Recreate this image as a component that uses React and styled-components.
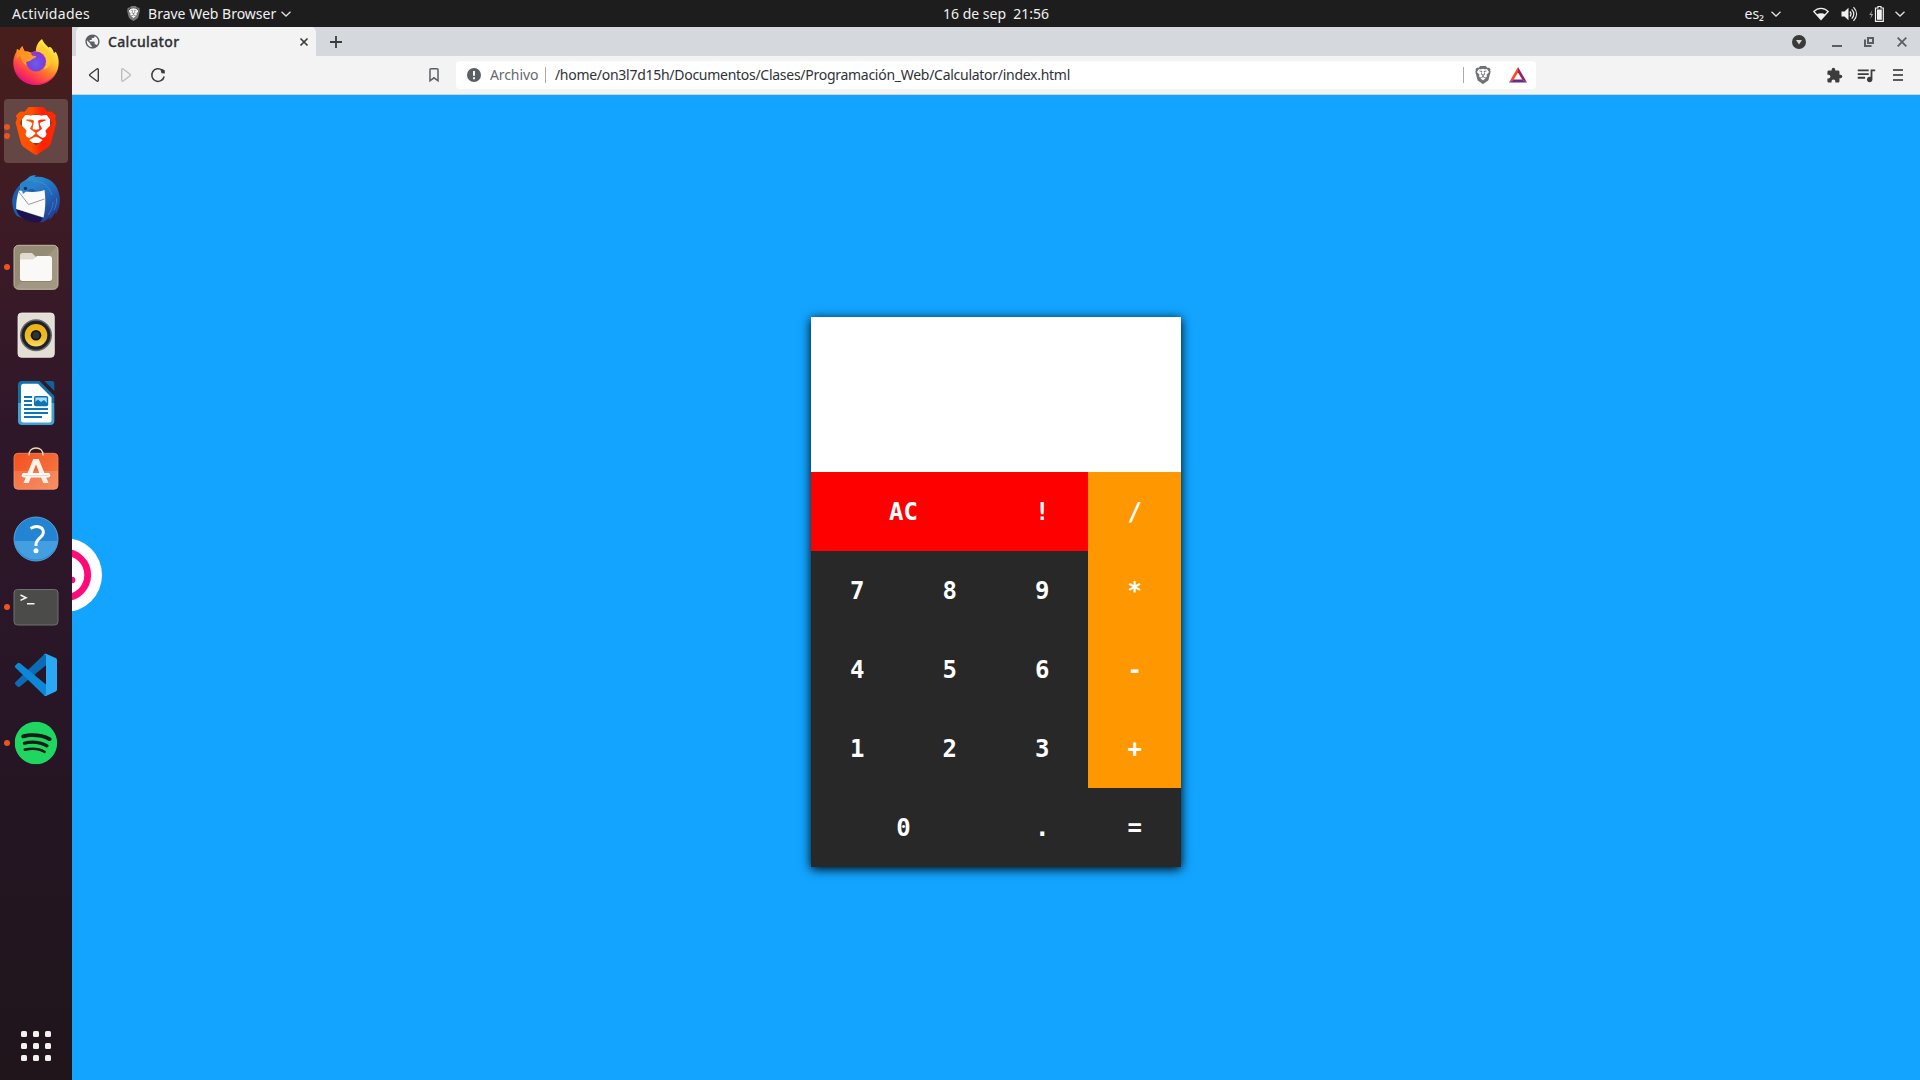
import React from "react";
import styled, { createGlobalStyle } from "styled-components";
import { SiBrave, SiSpotify } from "react-icons/si";
import { MdExtension, MdPublic, MdQueueMusic } from "react-icons/md";

const GlobalStyle = createGlobalStyle`
  * { box-sizing: border-box; }
  body { margin: 0; overflow: hidden; }
`;

const Desktop = styled.div`
  width: 1920px;
  height: 1080px;
  display: flex;
  flex-direction: column;
  font-family: "Noto Sans", "Open Sans", sans-serif;
  font-size: 14px;
  overflow: hidden;
`;

/* ---------- GNOME top bar ---------- */

const TopBar = styled.header`
  height: 27px;
  flex: none;
  display: flex;
  align-items: center;
  background: #1d1d1d;
  color: #f0f0f0;
  padding: 0 15px 0 12px;
  line-height: 26px;
`;

const TopLeft = styled.div`
  width: 931px;
  display: flex;
  align-items: center;
`;

const BarText = styled.span`
  white-space: pre;
  letter-spacing: ${(p) => p.$track || 0}px;
  font-size: ${(p) => p.$size || 14}px;
`;

const AppMenu = styled.div`
  display: flex;
  align-items: center;
  margin-left: 36px;
`;

const ShieldBadge = styled.span`
  display: flex;
  margin-right: 7px;
  color: #77787a;
  background: radial-gradient(ellipse 5px 6px, #f4f4f4 95%, transparent);
`;

const Tray = styled.div`
  margin-left: auto;
  display: flex;
  align-items: center;
`;

const Glyph = styled.svg`
  display: block;
  flex: none;
  width: ${(p) => p.$w}px;
  height: ${(p) => p.$h || p.$w}px;
  margin-left: ${(p) => p.$ml || 0}px;
  overflow: visible;
`;

/* ---------- Dock ---------- */

const Workspace = styled.div`
  flex: 1;
  min-height: 0;
  display: flex;
`;

const Dock = styled.nav`
  width: 72px;
  flex: none;
  display: flex;
  flex-direction: column;
  gap: 4px;
  padding: 4px 4px 2px;
  background: linear-gradient(180deg, #481e1b 0%, #3d1b25 18%, #2f172a 38%, #281627 62%, #21151e 90%, #20151b 100%);
`;

const Tile = styled.div`
  position: relative;
  width: 64px;
  height: 64px;
  display: grid;
  place-items: center;
  border-radius: 4px;
  background: ${(p) => (p.$active ? "#644644" : "transparent")};
  margin-top: ${(p) => (p.$last ? "auto" : 0)};
`;

const Dots = styled.div`
  position: absolute;
  left: 0;
  top: 0;
  height: 100%;
  display: flex;
  flex-direction: column;
  justify-content: center;
  gap: 3px;
`;

const Dot = styled.i`
  width: 6px;
  height: 6px;
  border-radius: 50%;
  background: #e95420;
`;

const AppGrid = styled.div`
  display: grid;
  grid-template-columns: repeat(3, 6px);
  gap: 6px;
`;

const GridDot = styled.i`
  height: 6px;
  border-radius: 1.5px;
  background: #f2f1f0;
`;

/* ---------- Browser ---------- */

const Browser = styled.main`
  flex: 1;
  min-width: 0;
  display: flex;
  flex-direction: column;
`;

const TabStrip = styled.div`
  height: 29px;
  flex: none;
  display: flex;
  align-items: center;
  background: #d5d8dd;
  padding: 0 13px 0 4px;
`;

const Tab = styled.div`
  width: 240px;
  height: 29px;
  display: flex;
  align-items: center;
  padding: 0 8px 0 8px;
  border-radius: 5px 5px 0 0;
  background: #f3f3f3;
  color: #2e3033;
`;

const TabTitle = styled.span`
  flex: 1;
  margin-left: 7px;
  font-weight: 500;
  -webkit-text-stroke: 0.3px currentColor;
  line-height: 28px;
  letter-spacing: ${(p) => p.$track}px;
`;

const WindowControls = styled.div`
  margin-left: auto;
  display: flex;
  align-items: center;
`;

const Toolbar = styled.div`
  height: 39px;
  flex: none;
  display: flex;
  align-items: center;
  padding: 0 17px 0 17px;
  background: #f3f3f3;
  border-bottom: 1px solid #cfd2d6;
  color: #3c3c3c;
`;

const AddressBar = styled.div`
  width: 1080px;
  height: 28px;
  margin-left: 17px;
  padding: 0 9px 0 11px;
  display: flex;
  align-items: center;
  border-radius: 4px;
  background: #fff;
`;

const UrlText = styled.span`
  font-size: 14px;
  line-height: 28px;
  white-space: pre;
  color: ${(p) => p.$color};
  letter-spacing: ${(p) => p.$track}px;
  width: ${(p) => p.$width}px;
  margin-left: ${(p) => p.$ml}px;
`;

const Divider = styled.i`
  width: 1px;
  height: 16px;
  background: #a9abae;
  margin-left: ${(p) => p.$ml}px;
`;

const ShieldButton = styled.span`
  display: flex;
  margin: 0 17px 0 10px;
  color: #707275;
`;

const Actions = styled.div`
  margin-left: auto;
  display: flex;
  align-items: center;
`;

const Page = styled.section`
  position: relative;
  flex: 1;
  min-height: 0;
  overflow: hidden;
  display: flex;
  align-items: center;
  justify-content: center;
  background: #12a4ff;
`;

const Recorder = styled.svg`
  position: absolute;
  left: 0;
  top: 443px;
  width: 31px;
  height: 74px;
`;

/* ---------- Calculator ---------- */

const Calculator = styled.div`
  width: 370px;
  height: 550px;
  margin-bottom: -9px;
  display: grid;
  grid-template-columns: 92.5px 92.5px 92.3px 92.7px;
  grid-template-rows: 155px repeat(5, 79px);
  background: #282828;
  box-shadow: 0 2px 10px #000;
`;

const Screen = styled.div`
  grid-column: 1 / -1;
  background: #fff;
`;

const keyColors = { clear: "#ff0000", operator: "#ff9800", digit: "#282828" };

const Key = styled.button`
  grid-column: span ${(p) => p.$span || 1};
  border: 0;
  padding: 0;
  background: ${(p) => keyColors[p.$kind]};
  color: #fff;
  font: bold 24px "DejaVu Sans Mono", monospace;
`;

const keys = [
  ["AC", "clear", 2], ["!", "clear"], ["/", "operator"],
  ["7", "digit"], ["8", "digit"], ["9", "digit"], ["*", "operator"],
  ["4", "digit"], ["5", "digit"], ["6", "digit"], ["-", "operator"],
  ["1", "digit"], ["2", "digit"], ["3", "digit"], ["+", "operator"],
  ["0", "digit", 2], [".", "digit"], ["=", "digit"],
];

/* ---------- Icons ---------- */

const Icon48 = ({ children }) => (
  <Glyph $w={48} viewBox="0 0 48 48">{children}</Glyph>
);

const Firefox = () => (
  <Icon48>
    <defs>
      <linearGradient id="ffBody" x1="0.8" y1="0.1" x2="0.25" y2="0.95">
        <stop offset="0" stopColor="#fff14a" />
        <stop offset="0.3" stopColor="#ffc22e" />
        <stop offset="0.55" stopColor="#ff7b2c" />
        <stop offset="0.8" stopColor="#ff3a4e" />
        <stop offset="1" stopColor="#e3107f" />
      </linearGradient>
      <radialGradient id="ffGlobe" cx="0.5" cy="0.6" r="0.6">
        <stop offset="0" stopColor="#6a5cf0" />
        <stop offset="0.6" stopColor="#7644dc" />
        <stop offset="1" stopColor="#a02ad0" />
      </radialGradient>
      <linearGradient id="ffFox" x1="0" y1="0" x2="1" y2="1">
        <stop offset="0" stopColor="#ff8a1f" />
        <stop offset="1" stopColor="#ffa02a" />
      </linearGradient>
    </defs>
    <path fill="url(#ffBody)" d="M30 0c1 3 4 6 6.500 8.500l1.500-.8c2 1.500 3.500 4 4 6.300l1.800-1.200C46 16.500 46.800 20 46.700 24 46.500 36.500 36.500 46 24 46S1.300 36.500 1.300 24c0-4.500 1-8 3.200-11.500l.5-2.500 2.500 1.500c.5-1.700 1.700-3.200 3.200-4.200.3 2.200.9 3.700 2.200 5.200 2.200-.3 4.400.2 6.100 1.200 1.500-.9 3.300-1.300 5-1.300C23.500 8 26 3 30 0z" />
    <path fill="#f31673" opacity=".65" d="M3 31c4 9 12 13.500 21 13.500S41 40 45 31c-3 10-12 15-21 15S6 41 3 31z" />
    <circle cx="24" cy="22.500" r="10" fill="url(#ffGlobe)" />
    <path fill="url(#ffFox)" d="M4.500 12.500 5 10l2.500 1.500c.5-1.700 1.700-3.200 3.200-4.200.3 2.200.9 3.700 2.200 5.200 2.400-.2 4.500.2 6.100 1.600l1 2.400 4.200.8c-.2 2-3.500 2.200-4.700 3.400-1.400 1.500-4 2-5.500 2 .2 2 .5 3 1 4-4-2-6-5-6.300-9.700-1.500.3-3.100 1.200-4.200 3 0-3.500-.2-6.500 1-9.500z" />
    <path fill="#ffc930" d="M26 12c5 0 8.500 4 8.500 9.500 0 3.500-1 7-3 9 7-2 9.500-8 7-15-1.500-3-4-5-7-7.500l-3-3c.3 3 0 5-1.500 6.500z" opacity=".85" />
  </Icon48>
);

const Brave = () => (
  <Icon48>
    <defs>
      <linearGradient id="braveShield" x1="0" x2="1">
        <stop offset="0" stopColor="#ff5500" />
        <stop offset="0.4" stopColor="#ff5000" />
        <stop offset="0.65" stopColor="#ff2000" />
        <stop offset="1" stopColor="#ff2a00" />
      </linearGradient>
    </defs>
    <path fill="#fff" d="M10 8h28v28H10z" />
    <SiBrave x="0" y="0" size={48} style={{ fill: "url(#braveShield)" }} />
  </Icon48>
);

const Thunderbird = () => (
  <Icon48>
    <defs>
      <linearGradient id="tbBody" x1="0.1" y1="0" x2="0.7" y2="1">
        <stop offset="0" stopColor="#2e9bd8" />
        <stop offset="0.45" stopColor="#2472c4" />
        <stop offset="1" stopColor="#233a91" />
      </linearGradient>
    </defs>
    <path fill="#1c5faf" d="M8 10C2 15-.5 23 .3 29c.4 4 2 9 4.700 12l8 3 18 1 8-24z" />
    <path fill="#20124d" d="M4 34l27 9-3 4C18 49 6 43 4 34z" />
    <path fill="url(#tbBody)" d="M8 9c3-3 6-3.500 8-6 2-2 5-3 8-2.500l-2 1.500C35 0 46 8 47.500 21c1 7-.5 14-4 18.500l.2-3.500c-1.500 4-3.700 7-6.500 9l.7-3c-2.500 3-6 5.200-10 5.500l3-4c3-7 1-12 2-17C30 18 24 15 19 14c-3-.5-4 3-8.500 3.500L8 21z" />
    <path fill="#fafafa" d="M7 15.500C15 17 24 18 32.500 15c1 8 1.500 17-1 27.500L4.200 34C4 27 5 21 7 15.500z" />
    <path d="M7 17l9.500 12.500L32.500 24" fill="none" stroke="#9b9b9b" strokeWidth="1" />
    <path fill="#2b80cb" d="M9 8c4-3 11-3 15 1-3 2-5 2-7 4-2 3-4 4-6 6-1-3-2-7-2-11z" />
    <circle cx="13.500" cy="13.500" r="1.700" fill="#163659" />
    <path fill="none" stroke="#3c9cd9" strokeWidth="1" opacity=".6" d="M22 6c8 0 15 5 18 14M36 40c3-4 5-8 5-13M42 35c2-4 3-8 2.500-12" />
  </Icon48>
);

const Files = () => (
  <Icon48>
    <defs>
      <linearGradient id="filesBg" x1="0" y1="0" x2="1" y2="1">
        <stop offset="0.48" stopColor="#958b74" />
        <stop offset="0.52" stopColor="#a29882" />
      </linearGradient>
    </defs>
    <rect x="2" y="2.300" width="44" height="44" rx="4.500" fill="url(#filesBg)" stroke="#c0b8a6" strokeWidth="1" />
    <path fill="#dfdbd0" d="M8 12.500a2.500 2.500 0 0 1 2.500-2.500H20l3.500 3.500V19H8z" />
    <path fill="#7f7561" opacity=".6" d="M8 34h32v2.500a2.500 2.500 0 0 1-2.500 2.500h-27A2.500 2.500 0 0 1 8 36.500z" />
    <path fill="#faf9f7" d="M8 16.500h13l4-3.500h12.500a2.500 2.500 0 0 1 2.500 2.500v20a2.500 2.500 0 0 1-2.500 2.500h-27A2.500 2.500 0 0 1 8 35.500z" />
  </Icon48>
);

const Rhythmbox = () => (
  <Icon48>
    <defs>
      <linearGradient id="cone" x1="0" y1="0" x2="0" y2="1">
        <stop offset="0" stopColor="#efb20f" />
        <stop offset="0.6" stopColor="#eebb25" />
        <stop offset="1" stopColor="#fbdc62" />
      </linearGradient>
    </defs>
    <rect x="6" y="2" width="36.300" height="44.300" rx="3.500" fill="#e4dfd4" stroke="#f3f0ea" strokeWidth=".8" />
    <circle cx="24" cy="24.300" r="16" fill="#66676d" />
    <circle cx="24" cy="24.300" r="14.500" fill="#1e202a" />
    <circle cx="24" cy="24.300" r="11.300" fill="url(#cone)" />
    <circle cx="24" cy="24.300" r="5.300" fill="#15161a" />
    <circle cx="24" cy="24.300" r="3.500" fill="#303236" />
  </Icon48>
);

const Writer = () => (
  <Icon48>
    <path fill="#1172a8" d="M10 2h17.500L42.300 17v7H6V6a4 4 0 0 1 4-4z" />
    <path fill="#3fa4d5" d="M6 24h36.300v18a4 4 0 0 1-4 4H10a4 4 0 0 1-4-4z" />
    <path fill="#0e6497" d="M32.500 2h7.500a2.300 2.300 0 0 1 2.300 2.300V12z" />
    <path fill="#fff" d="M11.500 4.700H26L39.500 18.500v23a2 2 0 0 1-2 2h-26a2.500 2.500 0 0 1-2.500-2.500V7.200a2.500 2.500 0 0 1 2.500-2.500z" />
    <path stroke="#0d75b3" strokeWidth="2" d="M12 18h8M12 22h8M12 26h8M12 30h24M12 34h24M12 38h18" />
    <rect x="22.700" y="17.700" width="12.800" height="8.800" rx="1" fill="#a9dcf5" stroke="#0d75b3" strokeWidth="1.400" />
    <path fill="#0d75b3" d="M23 26v-3l3-2.500 3 2.500 3-2 3 3v2z" />
  </Icon48>
);

const Software = () => (
  <Icon48>
    <defs>
      <linearGradient id="bag" x1="0" y1="0" x2="1" y2="0.8">
        <stop offset="0" stopColor="#f4501e" />
        <stop offset="1" stopColor="#f47a45" />
      </linearGradient>
    </defs>
    <rect x="2" y="6.300" width="44" height="36" rx="4" fill="url(#bag)" stroke="#f58a5e" strokeWidth=".8" />
    <path fill="#fff" opacity=".14" d="M2 24h44v14.500a4 4 0 0 1-4 4H6a4 4 0 0 1-4-4z" />
    <path d="M17 8.500V8C17 3.500 20 1 24 1s7 2.500 7 7v.5" fill="none" stroke="#f3dba9" strokeWidth="1.500" />
    <path fill="#fff2ea" d="M21.300 12h5.400L36.500 36h-5.200L24 17.500 16.700 36h-5.200z" />
    <path d="M12 28.300h24" stroke="#fff" strokeWidth="4.500" strokeLinecap="round" />
    <path d="M12 28.700h24" stroke="#f6cdb8" strokeWidth="1" strokeLinecap="round" />
  </Icon48>
);

const Help = () => (
  <Icon48>
    <circle cx="24" cy="24" r="22" fill="#2384d3" stroke="#65b4ea" strokeWidth=".8" />
    <path fill="#439fe0" d="M2.300 26a22 22 0 0 0 43.400 0z" />
    <path d="M18.500 13.500c3-1.800 6.500-2.300 9-1.500 4 1.200 4.700 5 3 8-1.800 3-6.500 4.800-6.500 9.500v1.500" fill="none" stroke="#fff" strokeWidth="3" />
    <circle cx="24" cy="35.800" r="2.500" fill="#fff" />
  </Icon48>
);

const Terminal = () => (
  <Icon48>
    <rect x="2" y="6.500" width="44" height="35.500" rx="3.500" fill="#4b4b4a" stroke="#70706e" strokeWidth="1" />
    <path d="M8.500 12l5.500 2.700-5.500 2.700M15 20.800h7.500" fill="none" stroke="#f5f5f5" strokeWidth="1.600" />
  </Icon48>
);

const VsCode = () => (
  <Icon48>
    <path fill="#0b6cb5" d="M34 2.700v11.500L8 35.500a2 2 0 0 1-2.600-.1L3.500 33.600a1.800 1.800 0 0 1 0-2.600L31.500 4z" />
    <path fill="#0d88d6" d="M34 45V33.500L8 12.300a2 2 0 0 0-2.600.1L3.500 14.200a1.800 1.800 0 0 0 0 2.600L31.500 43.800z" />
    <path fill="#29a8f3" d="M34 2.700 43.700 7A2.300 2.300 0 0 1 45 9v29.500a2.300 2.300 0 0 1-1.300 2L34 45c-1 .3-2 0-2.500-1.200 1.200 1 2.500.4 2.500-1V5c0-1.500-1.300-2-2.500-1 .5-1 1.500-1.500 2.500-1.300z" />
  </Icon48>
);

const Spotify = () => (
  <Icon48>
    <circle cx="24" cy="24" r="20" fill="#171a18" />
    <SiSpotify x="2.700" y="2.800" size={42.500} color="#1fd661" />
  </Icon48>
);

const dockApps = [
  { Icon: Firefox, windows: 0 },
  { Icon: Brave, windows: 2, active: true },
  { Icon: Thunderbird, windows: 0 },
  { Icon: Files, windows: 1 },
  { Icon: Rhythmbox, windows: 0 },
  { Icon: Writer, windows: 0 },
  { Icon: Software, windows: 0 },
  { Icon: Help, windows: 0 },
  { Icon: Terminal, windows: 1 },
  { Icon: VsCode, windows: 0 },
  { Icon: Spotify, windows: 1 },
];

const Chevron = ({ ml }) => (
  <Glyph $w={10} $h={6} $ml={ml} viewBox="0 0 10 6">
    <path d="M.5.8 5 5 9.500.8" fill="none" stroke="#e0e0e0" strokeWidth="1.300" />
  </Glyph>
);

const SystemTray = () => (
  <Tray>
    <BarText>es₂</BarText>
    <Chevron ml={7} />
    <Glyph $w={16} $h={14} $ml={32} viewBox="0 0 16 14">
      <path d="M.8 4.500C5 .2 11 .2 15.200 4.500L8 12.500z" fill="none" stroke="#f0f0f0" strokeWidth="1.300" />
      <path d="M3.600 7.500C6.200 5.800 9.800 5.800 12.400 7.500L8 12.500z" fill="#f0f0f0" />
    </Glyph>
    <Glyph $w={16} $h={14} $ml={12} viewBox="0 0 16 14">
      <path d="M.5 4.500h3L7.500.8v12.400l-4-3.700h-3z" fill="#f0f0f0" />
      <path d="M9 4.500c1.300 1.500 1.300 3.500 0 5M10.700 2.300c2.600 2.900 2.600 6.500 0 9.400M12.500.2c4 4.200 4 9.400 0 13.600" fill="none" stroke="#f0f0f0" strokeWidth="1.200" />
    </Glyph>
    <Glyph $w={15} $h={16} $ml={12} viewBox="0 0 15 16">
      <path d="M3.300 4 .3 9h2L1.300 13 4.200 8h-2z" fill="#a5a5a5" />
      <path d="M6.500 2H9V.5h3V2h2.300v13.300H6.500z" fill="none" stroke="#f0f0f0" strokeWidth="1.200" />
      <path d="M8 3.500h4.800v10.300H8z" fill="#f0f0f0" />
    </Glyph>
    <Chevron ml={11} />
  </Tray>
);

export default function App() {
  return (
    <Desktop>
      <GlobalStyle />
      <TopBar>
        <TopLeft>
          <BarText $track={0.3}>Actividades</BarText>
          <AppMenu>
            <ShieldBadge><SiBrave size={15} /></ShieldBadge>
            <BarText>Brave Web Browser</BarText>
            <Chevron ml={5} />
          </AppMenu>
        </TopLeft>
        <BarText>16 de sep  21:56</BarText>
        <SystemTray />
      </TopBar>

      <Workspace>
        <Dock>
          {dockApps.map(({ Icon, windows, active }, i) => (
            <Tile key={i} $active={active}>
              {windows > 0 && (
                <Dots>
                  {Array.from({ length: windows }, (_, n) => <Dot key={n} />)}
                </Dots>
              )}
              <Icon />
            </Tile>
          ))}
          <Tile $last>
            <AppGrid>
              {Array.from({ length: 9 }, (_, n) => <GridDot key={n} />)}
            </AppGrid>
          </Tile>
        </Dock>

        <Browser>
          <TabStrip>
            <Tab>
              <MdPublic size={17} color="#5b5f64" />
              <TabTitle $track={0.35}>Calculator</TabTitle>
              <Glyph $w={8} viewBox="0 0 8 8">
                <path d="M.5.5l7 7M7.500.5l-7 7" stroke="#3c3c3c" strokeWidth="1.700" />
              </Glyph>
            </Tab>
            <Glyph $w={12} $ml={14} viewBox="0 0 12 12">
              <path d="M6 0v12M0 6h12" stroke="#3c3c3c" strokeWidth="1.800" />
            </Glyph>
            <WindowControls>
              <Glyph $w={14} viewBox="0 0 14 14">
                <circle cx="7" cy="7" r="7" fill="#3a3a3a" />
                <path d="M4 5h6L7 9.500z" fill="#d5d8dd" />
              </Glyph>
              <Glyph $w={10} $ml={26} viewBox="0 0 10 10">
                <path d="M0 9h10" stroke="#5b5f64" strokeWidth="2" />
              </Glyph>
              <Glyph $w={10} $ml={22} viewBox="0 0 10 10">
                <path d="M4 1h5v5H4zM1 2.500V9h6.500" fill="none" stroke="#5b5f64" strokeWidth="2" />
              </Glyph>
              <Glyph $w={10} $ml={23} viewBox="0 0 10 10">
                <path d="M.7.7l8.600 8.600M9.300.7.7 9.300" stroke="#5b5f64" strokeWidth="1.800" />
              </Glyph>
            </WindowControls>
          </TabStrip>

          <Toolbar>
            <Glyph $w={10} $h={14} viewBox="0 0 10 14">
              <path d="M9.300 1.700v10.600c0 .9-.8 1.200-1.500.7L1 7.700c-.6-.4-.6-1 0-1.400L7.800 1c.7-.5 1.500-.2 1.500.7z" fill="none" stroke="#3c3c3c" strokeWidth="1.400" />
            </Glyph>
            <Glyph $w={10} $h={14} $ml={22} viewBox="0 0 10 14">
              <path d="M.7 1.700v10.600c0 .9.800 1.200 1.500.7L9 7.700c.6-.4.6-1 0-1.400L2.200 1C1.500.5.7.8.7 1.700z" fill="none" stroke="#bdbdbd" strokeWidth="1.400" />
            </Glyph>
            <Glyph $w={14} $ml={20} viewBox="0 0 14 14">
              <path d="M13.200 8.500A6.300 6.300 0 1 1 11.200 2.300" fill="none" stroke="#3c3c3c" strokeWidth="1.500" />
              <path d="M9.300 1l1.200 4.300 3.300.2V2.500L11.500 1z" fill="#3c3c3c" />
            </Glyph>
            <Glyph $w={10} $h={14} $ml={264} viewBox="0 0 10 14">
              <path d="M1 1.800A1 1 0 0 1 2 .8h6a1 1 0 0 1 1 1v11L5 9.800l-4 3z" fill="none" stroke="#5b5f64" strokeWidth="1.500" />
            </Glyph>
            <AddressBar>
              <Glyph $w={14} viewBox="0 0 14 14">
                <circle cx="7" cy="7" r="7" fill="#5b5f64" />
                <path d="M7 3v4.800M7 9.300v1.900" stroke="#fff" strokeWidth="1.900" />
              </Glyph>
              <UrlText $color="#66696e" $track={-0.1} $width={55} $ml={9}>Archivo</UrlText>
              <Divider $ml={0} />
              <UrlText $color="#303236" $track={-0.275} $width={911} $ml={9}>/home/on3l7d15h/Documentos/Clases/Programación_Web/Calculator/index.html</UrlText>
              <Divider $ml={-1} />
              <ShieldButton><SiBrave size={18} /></ShieldButton>
              <Glyph $w={18} $h={16} viewBox="0 0 18 16">
                <path d="M9 0v5.500L4.800 12.500 0 15.500z" fill="#ff4724" />
                <path d="M9 0v5.500l4.200 7 4.800 3z" fill="#9e1f63" />
                <path d="M0 15.500 4.800 12.500h8.400l4.800 3z" fill="#662d91" />
              </Glyph>
            </AddressBar>
            <Actions>
              <MdExtension size={17} />
              <Glyph as={MdQueueMusic} $w={22} $ml={12} />
              <Glyph $w={10} $h={12} $ml={16} viewBox="0 0 10 12">
                <path d="M0 1h10M0 6h10M0 11h10" stroke="#5b5b5b" strokeWidth="2" />
              </Glyph>
            </Actions>
          </Toolbar>

          <Page>
            <Recorder viewBox="0 0 31 74">
              <circle cx="-7" cy="37" r="37" fill="#fff" />
              <circle cx="-7" cy="37" r="22.700" fill="none" stroke="#ff0a78" strokeWidth="6.800" />
              <circle cx="0" cy="42" r="3.300" fill="#ff0a78" />
            </Recorder>
            <Calculator>
              <Screen />
              {keys.map(([label, kind, span]) => (
                <Key key={label} $kind={kind} $span={span}>{label}</Key>
              ))}
            </Calculator>
          </Page>
        </Browser>
      </Workspace>
    </Desktop>
  );
}
